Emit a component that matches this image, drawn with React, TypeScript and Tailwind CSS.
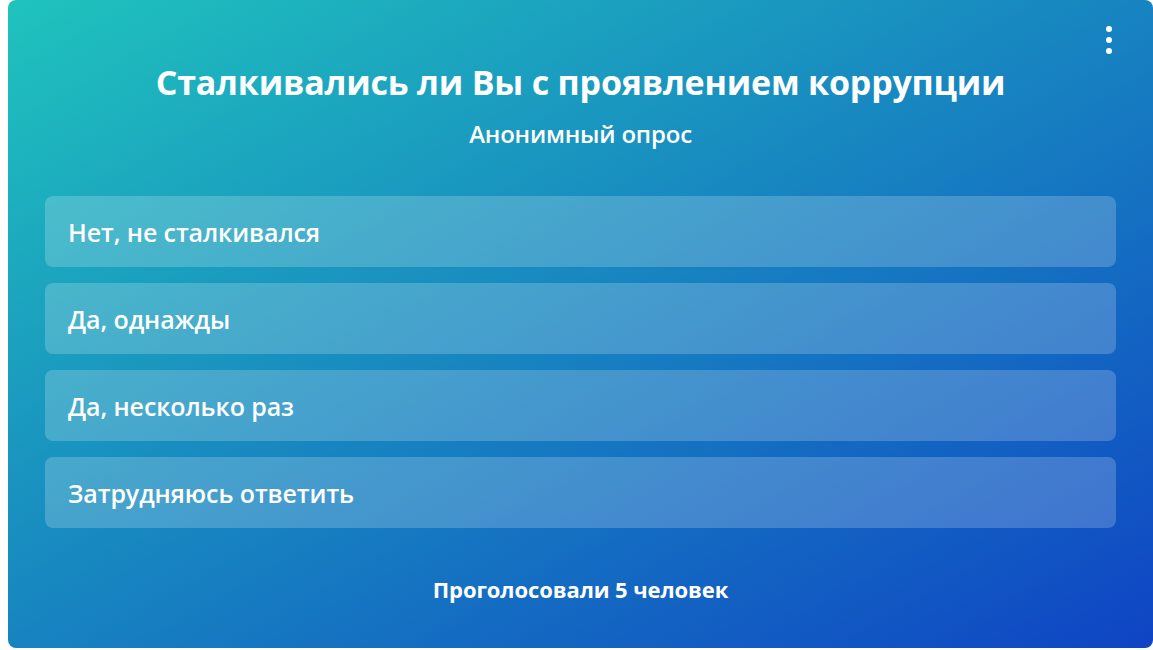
import React from 'react';

const options = [
  'Нет, не сталкивался',
  'Да, однажды',
  'Да, несколько раз',
  'Затрудняюсь ответить',
];

export default function App() {
  return (
    <div
      className="w-[1153px] h-[650px] bg-white pl-[8px] pb-[2px]"
      style={{ fontFamily: '"Open Sans", "Noto Sans", sans-serif' }}
    >
      <div className="relative h-full rounded-[8px] bg-[linear-gradient(to_bottom_right,#1fc3bd,#0f44c4)] text-white flex flex-col px-[37px]">
        <button className="absolute right-[37px] top-[22px] flex flex-col gap-[5px] p-1">
          <span className="w-[6px] h-[6px] rounded-full bg-white" />
          <span className="w-[6px] h-[6px] rounded-full bg-white" />
          <span className="w-[6px] h-[6px] rounded-full bg-white" />
        </button>

        <h1 className="mt-[59px] text-center text-[34px] leading-[46px] font-bold tracking-[-0.2px]">
          Сталкивались ли Вы с проявлением коррупции
        </h1>
        <p className="mt-[14px] text-center text-[24px] leading-[30px] font-semibold tracking-[-0.2px]">
          Анонимный опрос
        </p>

        <div className="mt-[47px] flex flex-col gap-[16px]">
          {options.map((o) => (
            <div
              key={o}
              className="h-[71px] rounded-[8px] bg-white/20 flex items-center px-[23px] pt-[3px] text-[25px] font-semibold tracking-[-0.1px]"
            >
              {o}
            </div>
          ))}
        </div>

        <div className="mt-[45px] text-center text-[22px] font-bold tracking-[-0.1px]">
          Проголосовали 5 человек
        </div>
      </div>
    </div>
  );
}
